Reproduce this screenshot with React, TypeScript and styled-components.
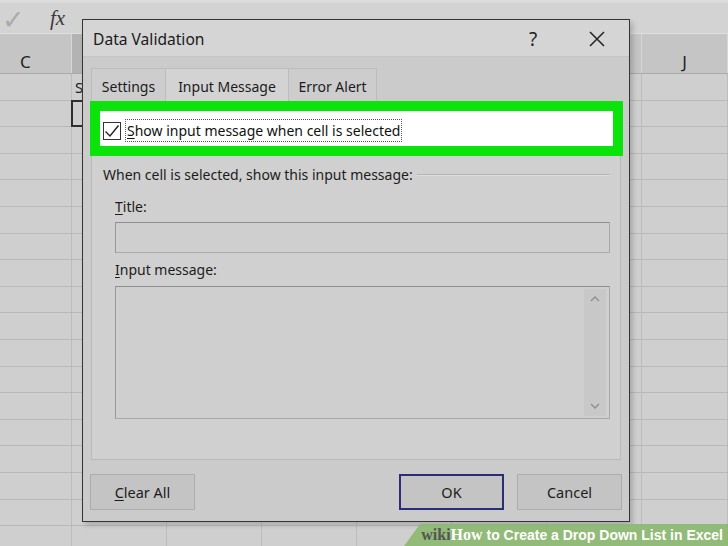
import React from "react";
import styled, { createGlobalStyle } from "styled-components";

const Global = createGlobalStyle`
  html, body { margin: 0; padding: 0; }
  body { background: #cfcfcf; }
  * { box-sizing: border-box; }
`;

const UI = `"Noto Sans", "Open Sans", "Liberation Sans", sans-serif`;

const Page = styled.div`
  position: relative;
  width: 728px;
  height: 546px;
  overflow: hidden;
  background: #cfcfcf;
  font-family: ${UI};
  color: #1c1c1c;
`;

/* ---------- spreadsheet behind ---------- */
const Sheet = styled.div`
  display: flex;
  flex-direction: column;
`;

const FormulaBar = styled.div`
  height: 34px;
  display: flex;
  align-items: center;
  background: #d3d3d3;
  border-top: 3px solid #dcdcdc;
  border-bottom: 1px solid #e0e0e0;
`;

const BarMark = styled.span`
  width: 26px;
  color: #ababab;
  font-size: 27px;
  line-height: 1;
  text-align: center;
`;

const Fx = styled.span`
  margin-left: 24px;
  font-family: "Liberation Serif", "DejaVu Serif", serif;
  font-style: italic;
  font-size: 21px;
  color: #3a3a3a;
`;

const ColumnsRow = styled.div`
  display: grid;
  grid-template-columns: 72px repeat(6, 95px) 1fr;
  height: 40px;
  background: #c5c5c5;
  border-bottom: 1px solid #a9a9a9;
`;

const ColHead = styled.div<{ $selected?: boolean; $first?: boolean }>`
  display: flex;
  align-items: center;
  justify-content: ${(p) => (p.$first ? "flex-start" : "center")};
  padding-left: ${(p) => (p.$first ? "20px" : "0")};
  font-size: 17px;
  color: #222;
  padding-top: 16px;
  background: ${(p) => (p.$selected ? "#b3b3b3" : "transparent")};
  border-right: 1px solid #d6d6d6;
`;

const Row = styled.div`
  display: grid;
  grid-template-columns: 72px repeat(6, 95px) 1fr;
  height: 26.6px;
  border-bottom: 1px solid #b8b8b8;
`;

const Cell = styled.div<{ $active?: boolean }>`
  border-right: 1px solid #bcbcbc;
  font-size: 15px;
  padding-left: 3px;
  line-height: 26px;
  ${(p) => (p.$active ? "outline: 2px solid #2f2f2f; outline-offset: -1px;" : "")}
`;

/* ---------- dialog ---------- */
const Dialog = styled.div`
  position: absolute;
  left: 82px;
  top: 19px;
  width: 548px;
  height: 503px;
  border: 1px solid #353535;
  box-shadow: 3px 3px 5px rgba(0, 0, 0, 0.18);
  display: flex;
  flex-direction: column;
  background: #cbcbcb;
`;

const TitleBar = styled.div`
  height: 38px;
  display: flex;
  align-items: center;
  padding: 2px 9px 0 10px;
  background: #d5d5d5;
  border-bottom: 1px solid #c4c4c4;
`;

const Title = styled.div`
  flex: 1;
  font-size: 15.6px;
  color: #1a1a1a;
`;

const CaptionButton = styled.div`
  width: 46px;
  height: 30px;
  display: flex;
  align-items: center;
  justify-content: center;
  font-size: 19px;
  color: #222;
  & + & {
    margin-left: 18px;
  }
`;

const Body = styled.div`
  flex: 1;
  display: flex;
  flex-direction: column;
  padding: 11px 8px 11px 8px;
`;

const TabList = styled.div`
  display: flex;
  height: 34px;
`;

const Tab = styled.div<{ $w: number; $active?: boolean }>`
  width: ${(p) => p.$w}px;
  display: flex;
  align-items: center;
  justify-content: center;
  padding-top: 2px;
  font-size: 14px;
  color: #1c1c1c;
  background: ${(p) => (p.$active ? "#d3d3d3" : "#cdcdcd")};
  border: 1px solid #bdbdbd;
  border-bottom: none;
  & + & {
    border-left: none;
  }
`;

const Panel = styled.div`
  height: 358px;
  border: 1px solid #bababa;
  background: #d0d0d0;
  display: flex;
  flex-direction: column;
`;

const Highlight = styled.div`
  margin: -2px -3px 0 -2px;
  height: 55px;
  border: 10px solid #0be40b;
  background: #fff;
  display: flex;
  align-items: center;
  padding: 4px 0 0 3px;
`;

const CheckBox = styled.div`
  width: 18px;
  height: 18px;
  border: 1px solid #333;
  background: #fff;
  display: flex;
  align-items: center;
  justify-content: center;
`;

const FocusLabel = styled.span`
  margin-left: 4px;
  padding: 0 1px;
  border: 1px dotted #555;
  font-size: 14px;
  line-height: 21px;
  color: #111;
`;

const U = styled.span`
  text-decoration: underline;
  text-underline-offset: 2px;
`;

const Legend = styled.div`
  margin: 9px 10px 0 11px;
  display: flex;
  align-items: center;
  font-size: 14px;
  line-height: 20px;
  color: #1c1c1c;
  &::after {
    content: "";
    flex: 1;
    margin-left: 4px;
    height: 0;
    border-top: 1px solid #b4b4b4;
    border-bottom: 1px solid #dedede;
  }
`;

const FieldLabel = styled.div<{ $top: number }>`
  margin: ${(p) => p.$top}px 0 0 23px;
  font-size: 14px;
  line-height: 20px;
  color: #1c1c1c;
`;

const TextBox = styled.div<{ $h: number; $top: number }>`
  margin: ${(p) => p.$top}px 10px 0 23px;
  height: ${(p) => p.$h}px;
  background: #cfcfcf;
  border: 1px solid #a9a9a9;
  border-top-color: #8e8e8e;
  border-left-color: #979797;
  display: flex;
  justify-content: flex-end;
  padding: 2px 3px 2px 0;
`;

const ScrollBar = styled.div`
  width: 22px;
  background: #c8c8c8;
  display: flex;
  flex-direction: column;
  justify-content: space-between;
  align-items: center;
  padding: 6px 0;
`;

const Footer = styled.div`
  margin: 14px -1px 0 -1px;
  display: flex;
  align-items: center;
`;

const Button = styled.div<{ $default?: boolean }>`
  width: 105px;
  height: 36px;
  display: flex;
  align-items: center;
  justify-content: center;
  font-size: 14.5px;
  color: #1c1c1c;
  background: #c4c4c4;
  border: ${(p) => (p.$default ? "2px solid #2a2e78" : "1px solid #acacac")};
  & + & {
    margin-left: 13px;
  }
`;

const Spacer = styled.div`
  flex: 1;
`;

/* ---------- watermark ---------- */
const Watermark = styled.div`
  position: absolute;
  right: 0;
  bottom: 0;
  width: 324px;
  height: 22px;
  background: rgba(138, 183, 108, 0.88);
  clip-path: polygon(16px 0, 100% 0, 100% 100%, 0 100%);
  display: flex;
  align-items: center;
  justify-content: flex-end;
  padding-right: 5px;
  font-family: "Liberation Sans", Arial, sans-serif;
  font-weight: bold;
  font-size: 14px;
  color: #fff;
  white-space: nowrap;
`;

const Wiki = styled.span<{ $dark?: boolean }>`
  font-family: "Liberation Serif", "DejaVu Serif", serif;
  font-weight: bold;
  font-size: 16px;
  color: ${(p) => (p.$dark ? "#555555" : "#fff")};
`;

const Check = () => (
  <svg width="16" height="14" viewBox="0 0 16 14">
    <path d="M1.5 7.5 L6 12 L14.5 1.5" fill="none" stroke="#222" strokeWidth="1.4" />
  </svg>
);

const Close = () => (
  <svg width="16" height="16" viewBox="0 0 16 16">
    <path d="M1 1 L15 15 M15 1 L1 15" stroke="#222" strokeWidth="1.5" />
  </svg>
);

const Chevron = ({ up }: { up?: boolean }) => (
  <svg width="10" height="7" viewBox="0 0 10 7">
    <path
      d={up ? "M1 6 L5 2 L9 6" : "M1 1 L5 5 L9 1"}
      fill="none"
      stroke="#8e8e8e"
      strokeWidth="1.3"
    />
  </svg>
);

const columns = ["C", "D", "E", "F", "G", "H", "I", "J"];
const visibleHeads = new Set(["C", "J"]);

export default function App() {
  const rows = Array.from({ length: 18 }, (_, i) => i);
  return (
    <Page>
      <Global />
      <Sheet>
        <FormulaBar>
          <BarMark>✓</BarMark>
          <Fx>fx</Fx>
        </FormulaBar>
        <ColumnsRow>
          {columns.map((c) => (
            <ColHead key={c} $selected={c === "D"} $first={c === "C"}>
              {visibleHeads.has(c) ? c : ""}
            </ColHead>
          ))}
        </ColumnsRow>
        {rows.map((r) => (
          <Row key={r}>
            {columns.map((c) => (
              <Cell key={c} $active={r === 1 && c === "D"}>
                {r === 0 && c === "D" ? "S" : ""}
              </Cell>
            ))}
          </Row>
        ))}
      </Sheet>

      <Dialog>
        <TitleBar>
          <Title>Data Validation</Title>
          <CaptionButton>?</CaptionButton>
          <CaptionButton>
            <Close />
          </CaptionButton>
        </TitleBar>
        <Body>
          <TabList>
            <Tab $w={75}>Settings</Tab>
            <Tab $w={123} $active>
              Input Message
            </Tab>
            <Tab $w={88}>Error Alert</Tab>
          </TabList>
          <Panel>
            <Highlight>
              <CheckBox>
                <Check />
              </CheckBox>
              <FocusLabel>
                <U>S</U>how input message when cell is selected
              </FocusLabel>
            </Highlight>
            <Legend>When cell is selected, show this input message:</Legend>
            <FieldLabel $top={12}>
              <U>T</U>itle:
            </FieldLabel>
            <TextBox $h={31} $top={5} />
            <FieldLabel $top={7}>
              <U>I</U>nput message:
            </FieldLabel>
            <TextBox $h={133} $top={6}>
              <ScrollBar>
                <Chevron up />
                <Chevron />
              </ScrollBar>
            </TextBox>
          </Panel>
          <Footer>
            <Button>
              <span>
                <U>C</U>lear All
              </span>
            </Button>
            <Spacer />
            <Button $default>OK</Button>
            <Button>Cancel</Button>
          </Footer>
        </Body>
      </Dialog>

      <Watermark>
        <Wiki $dark>wiki</Wiki>
        <Wiki>How</Wiki>
        &nbsp;to Create a Drop Down List in Excel
      </Watermark>
    </Page>
  );
}
